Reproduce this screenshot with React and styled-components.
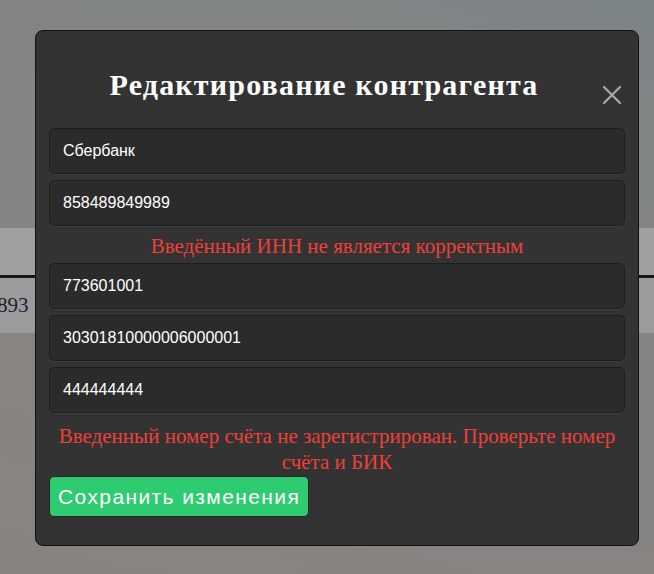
import React from 'react';
import styled, { createGlobalStyle } from 'styled-components';

const GlobalStyle = createGlobalStyle`
  html, body {
    margin: 0;
    padding: 0;
    height: 100%;
  }
  body {
    background: linear-gradient(20deg, #88837e 0%, #858483 50%, #7d8486 100%);
    font-family: "Liberation Serif", serif;
    overflow: hidden;
  }
`;

const Page = styled.div`
  padding-top: 228px;
`;

const Band = styled.div`
  height: 47px;
  background: #a0a0a0;
  border-bottom: 3px solid #161616;
`;

const Row = styled.div`
  height: 55px;
  background: #9b9b9b;
  display: flex;
  align-items: center;
  font-size: 21px;
  color: #1b2130;
  margin-left: -3px;
`;

const Overlay = styled.div`
  position: fixed;
  top: 0;
  left: 0;
  width: 100%;
  height: 100%;
  padding: 30px 0 0 35px;
  box-sizing: border-box;
`;

const Modal = styled.div`
  position: relative;
  width: 604px;
  height: 516px;
  box-sizing: border-box;
  background: #333333;
  border: 1px solid #111;
  border-radius: 8px;
  padding: 0 13px;
  display: flex;
  flex-direction: column;
`;

const Header = styled.div`
  height: 97px;
  display: flex;
  align-items: center;
  justify-content: center;
  padding: 11px 26px 0 0;
  box-sizing: border-box;
`;

const Title = styled.h2`
  margin: 0;
  font-family: "Liberation Serif", serif;
  font-weight: 700;
  font-size: 30px;
  letter-spacing: 1.2px;
  color: #ffffff;
`;

const CloseButton = styled.button`
  position: absolute;
  top: 53px;
  right: 15px;
  width: 22px;
  height: 22px;
  padding: 0;
  border: none;
  background: transparent;
  display: flex;
  align-items: center;
  justify-content: center;
  cursor: pointer;
`;

const Form = styled.div`
  display: flex;
  flex-direction: column;
  gap: 6px;
`;

const Input = styled.input`
  height: 46px;
  box-sizing: border-box;
  background: #2b2b2b;
  border: 1px solid #1e1e1e;
  border-radius: 5px;
  box-shadow: 0 1px 0 #3d3d3d;
  padding: 0 13px;
  color: #ffffff;
  font-family: "Liberation Sans", Arial, sans-serif;
  font-size: 16px;
  outline: none;
`;

const Error = styled.div`
  color: #f03f38;
  font-family: "Liberation Serif", serif;
  font-size: 21px;
  line-height: ${p => (p.$multi ? '26px' : '22px')};
  text-align: center;
  padding-top: ${p => (p.$multi ? '4px' : '3px')};
`;

const SaveButton = styled.button`
  align-self: flex-start;
  margin-top: -5px;
  height: 41px;
  padding: 0 8px;
  background: #2ecc71;
  border: 1px solid #222;
  border-radius: 5px;
  color: #ffffff;
  font-family: "Liberation Sans", Arial, sans-serif;
  font-size: 21px;
  letter-spacing: 1.4px;
  cursor: pointer;
`;

const fields = [
  'Сбербанк',
  '858489849989',
  '773601001',
  '30301810000006000001',
  '444444444',
];

export default function App() {
  return (
    <>
      <GlobalStyle />
      <Page>
        <Band />
        <Row>893</Row>
      </Page>
      <Overlay>
        <Modal>
          <Header>
            <Title>Редактирование контрагента</Title>
          </Header>
          <CloseButton aria-label="Закрыть">
            <svg width="20" height="20" viewBox="0 0 20 20">
              <path d="M2 2 L18 18 M18 2 L2 18" stroke="#a9a9a9" strokeWidth="2.2" strokeLinecap="round" />
            </svg>
          </CloseButton>
          <Form>
            <Input defaultValue={fields[0]} />
            <Input defaultValue={fields[1]} />
            <Error>Введённый ИНН не является корректным</Error>
            <Input defaultValue={fields[2]} />
            <Input defaultValue={fields[3]} />
            <Input defaultValue={fields[4]} />
            <Error $multi>
              Введенный номер счёта не зарегистрирован. Проверьте номер счёта и БИК
            </Error>
            <SaveButton>Сохранить изменения</SaveButton>
          </Form>
        </Modal>
      </Overlay>
    </>
  );
}
